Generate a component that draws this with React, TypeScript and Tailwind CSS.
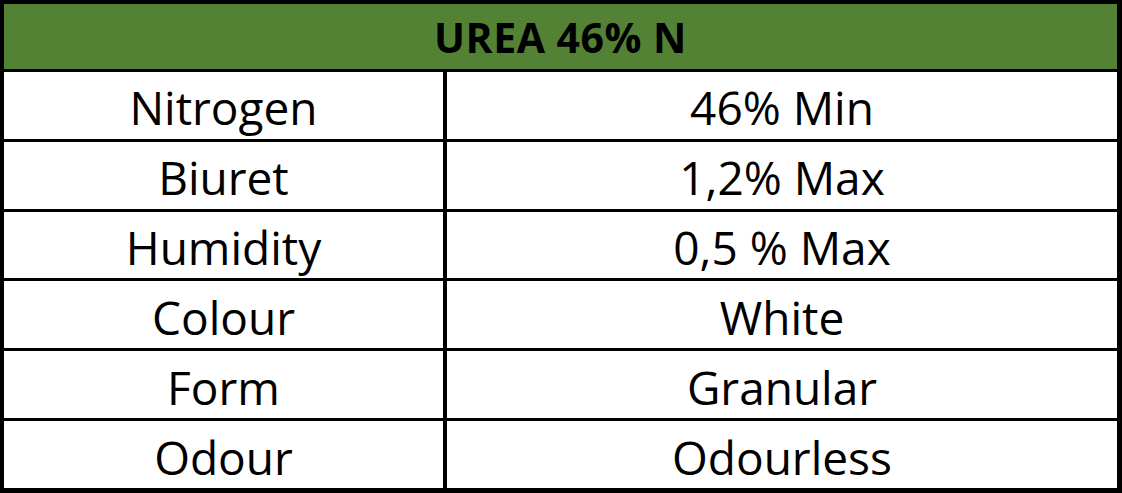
import React from 'react';

const rows: [string, string][] = [
  ['Nitrogen', '46% Min'],
  ['Biuret', '1,2% Max'],
  ['Humidity', '0,5 % Max'],
  ['Colour', 'White'],
  ['Form', 'Granular'],
  ['Odour', 'Odourless'],
];

export default function App() {
  return (
    <div className="w-[1122px] h-[493px] bg-white font-['Open_Sans',sans-serif] text-black">
      <div className="flex h-full flex-col border-t-4 border-l-4 border-r-[5px] border-b-[5px] border-black">
        {/* Title bar */}
        <div className="flex h-[68px] shrink-0 items-center justify-center border-b-[3px] border-black bg-[#548235]">
          <span className="text-[41px] font-bold leading-none tracking-[0.5px] pt-[2px]">UREA 46% N</span>
        </div>

        {rows.map(([label, value], i) => (
          <div
            key={label}
            className={`grid flex-1 grid-cols-[443px_1fr] ${i > 0 ? 'border-t-[3px] border-black' : ''}`}
          >
            <div className="flex items-center justify-center border-r-4 border-black text-[46px] leading-none pt-[4px]">
              {label}
            </div>
            <div className="flex items-center justify-center text-[46px] leading-none pt-[4px]">{value}</div>
          </div>
        ))}
      </div>
    </div>
  );
}
